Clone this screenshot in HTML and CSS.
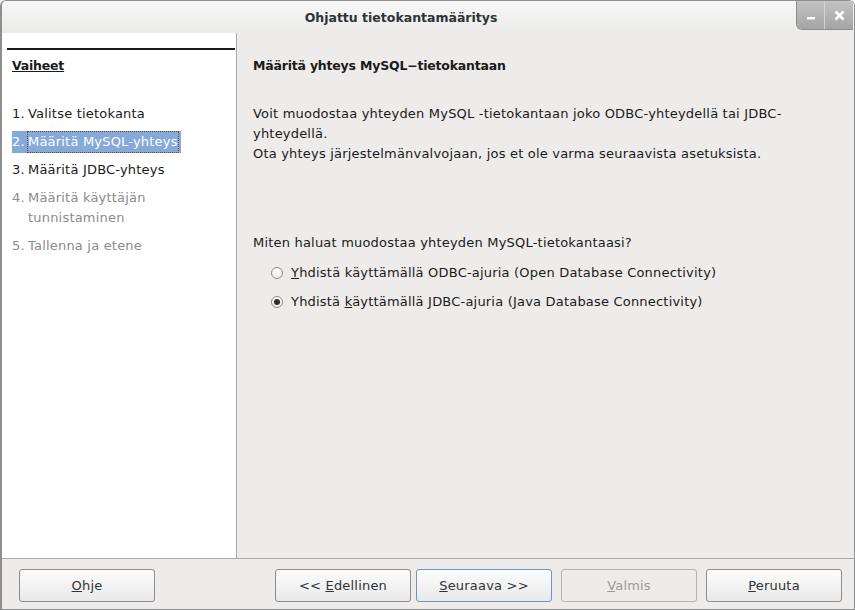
FILE: index.html
```html
<!DOCTYPE html>
<html lang="fi">
<head>
<meta charset="utf-8">
<title>Ohjattu tietokantamääritys</title>
<link rel="stylesheet" href="styles.css">
</head>
<body>
<div class="window">
  <div class="titlebar">
    <div class="title">Ohjattu tietokantamääritys</div>
    <div class="controls">
      <div class="ctl ctl-min"><svg width="10" height="10" viewBox="0 0 10 10"><rect x="1" y="6" width="8" height="2.4" fill="#fff"/></svg></div>
      <div class="ctl ctl-close"><svg width="11" height="11" viewBox="0 0 11 11"><path d="M1.5 1.5 L9.5 9.5 M9.5 1.5 L1.5 9.5" stroke="#fff" stroke-width="2.6" stroke-linecap="butt"/></svg></div>
    </div>
  </div>
  <div class="main">
    <div class="roadmap">
      <div class="rule"></div>
      <div class="rm-title">Vaiheet</div>
      <ul class="steps">
        <li class="step"><span class="num">1.</span><span>Valitse tietokanta</span></li>
        <li class="step active"><span class="hl"><span class="num">2.</span><span class="focus">Määritä MySQL-yhteys</span></span></li>
        <li class="step"><span class="num">3.</span><span>Määritä JDBC-yhteys</span></li>
        <li class="step disabled two"><span class="num">4.</span><span>Määritä käyttäjän<br>tunnistaminen</span></li>
        <li class="step disabled"><span class="num">5.</span><span>Tallenna ja etene</span></li>
      </ul>
    </div>
    <div class="page">
      <h1 class="heading">Määritä yhteys MySQL−tietokantaan</h1>
      <p class="intro">Voit muodostaa yhteyden MySQL -tietokantaan joko ODBC-yhteydellä tai JDBC-<br>yhteydellä.<br>Ota yhteys järjestelmänvalvojaan, jos et ole varma seuraavista asetuksista.</p>
      <p class="question">Miten haluat muodostaa yhteyden MySQL-tietokantaasi?</p>
      <div class="options">
        <label class="opt"><span class="radio"></span><span><u>Y</u>hdistä käyttämällä ODBC-ajuria (Open Database Connectivity)</span></label>
        <label class="opt"><span class="radio checked"></span><span>Yhdistä <u>k</u>äyttämällä JDBC-ajuria (Java Database Connectivity)</span></label>
      </div>
    </div>
  </div>
  <div class="buttons">
    <button class="btn"><u>O</u>hje</button>
    <div class="spacer"></div>
    <button class="btn">&lt;&lt; <u>E</u>dellinen</button>
    <button class="btn default"><u>S</u>euraava &gt;&gt;</button>
    <button class="btn disabled"><u>V</u>almis</button>
    <button class="btn"><u>P</u>eruuta</button>
  </div>
</div>
</body>
</html>
```
FILE: styles.css
```css
* { box-sizing: border-box; }
html, body { margin: 0; padding: 0; background: #ffffff; }
body {
  font-family: "DejaVu Sans", "Open Sans", sans-serif;
  font-size: 13px;
  letter-spacing: 0.2px;
  color: #2e3436;
}
.window {
  width: 855px;
  height: 610px;
  display: flex;
  flex-direction: column;
  border: 1px solid #8f8f8f;
  border-left-width: 2px;
  border-radius: 6px 6px 0 0;
  background: #edeceb;
  overflow: hidden;
}
.titlebar {
  height: 32px;
  display: flex;
  align-items: flex-start;
  background: linear-gradient(#f7f7f7, #ecebea);
  flex-shrink: 0;
}
.title {
  flex: 1;
  text-align: center;
  font-weight: bold;
  font-size: 12.5px;
  letter-spacing: 0;
  line-height: 34px;
  color: #2e3436;
  padding-left: 4px;
}
.controls {
  display: flex;
  height: 30px;
  margin-top: -1px;
  margin-right: 1px;
  border-radius: 0 0 0 6px;
  overflow: hidden;
  border: 1px solid #8d8d8d;
  border-top: none;
  border-right: none;
}
.ctl {
  width: 28px;
  height: 30px;
  display: flex;
  align-items: center;
  justify-content: center;
  background: linear-gradient(#c4c4c4, #a3a3a3);
}
.ctl-min { border-right: 1px solid #d4d4d4; }
.ctl-min svg { margin-top: 2px; }
.main {
  flex: 1;
  display: flex;
  min-height: 0;
}
.roadmap {
  width: 235px;
  background: #ffffff;
  border-right: 1px solid #a9a9a9;
  padding: 15px 0 0 10px;
  flex-shrink: 0;
}
.rule {
  height: 2px;
  background: #1a1a1a;
  margin-left: -5px;
  margin-right: 1px;
}
.rm-title {
  margin-top: 7px;
  font-weight: bold;
  font-size: 12.5px;
  text-decoration: underline;
  line-height: 18px;
  color: #1a1a1a;
  letter-spacing: -0.2px;
}
.steps {
  list-style: none;
  margin: 29px 0 0 0;
  padding: 0;
}
.step {
  display: flex;
  line-height: 20px;
  margin-bottom: 8px;
  color: #1a1a1a;
}
.step .num { width: 16px; flex-shrink: 0; }
.step.disabled { color: #8b8b8b; }
.hl {
  display: flex;
  background: #86a9d9;
  color: #ffffff;
  padding: 1px 3px 1px 0;
  margin: -1px 0;
}
.focus {
  outline: 1px dotted #6b4d1f;
}
.page {
  flex: 1;
  padding: 23px 16px 0 16px;
}
.heading {
  margin: 0;
  font-size: 12.5px;
  font-weight: bold;
  letter-spacing: -0.2px;
  line-height: 20px;
  color: #1a1a1a;
}
.intro {
  margin: 28px 0 0 0;
  line-height: 20px;
  color: #1a1a1a;
}
.question {
  margin: 69px 0 0 0;
  line-height: 20px;
  color: #1a1a1a;
}
.options {
  margin: 10px 0 0 18px;
  display: flex;
  flex-direction: column;
  gap: 9px;
}
.opt {
  display: flex;
  align-items: center;
  gap: 8px;
  line-height: 20px;
  color: #1a1a1a;
}
.radio {
  width: 12px;
  height: 12px;
  border-radius: 50%;
  border: 1px solid #8a8a8a;
  background: linear-gradient(#ffffff, #ececec);
  position: relative;
  flex-shrink: 0;
}
.radio.checked::after {
  content: "";
  position: absolute;
  left: 2px;
  top: 2px;
  width: 6px;
  height: 6px;
  border-radius: 50%;
  background: #2e2e2e;
}
.buttons {
  height: 51px;
  flex-shrink: 0;
  border-top: 1px solid #a9a9a9;
  display: flex;
  align-items: center;
  gap: 5px;
  padding: 2px 12px 0 17px;
}
.spacer { flex: 1; }
.btn {
  width: 136px;
  height: 33px;
  font-family: inherit;
  font-size: 13px;
  letter-spacing: 0.2px;
  color: #2e3436;
  border: 1px solid #8e8e8e;
  border-radius: 3px;
  background: linear-gradient(#fcfcfc, #e9e9e9);
  padding: 0;
  margin-left: 4px;
}
.btn.default { border-color: #7593b9; margin-left: 0; }
.btn.disabled { color: #9a9a9a; border-color: #b4b4b4; background: #edeceb; }
.buttons .btn:first-child { margin-left: 0; }
```
